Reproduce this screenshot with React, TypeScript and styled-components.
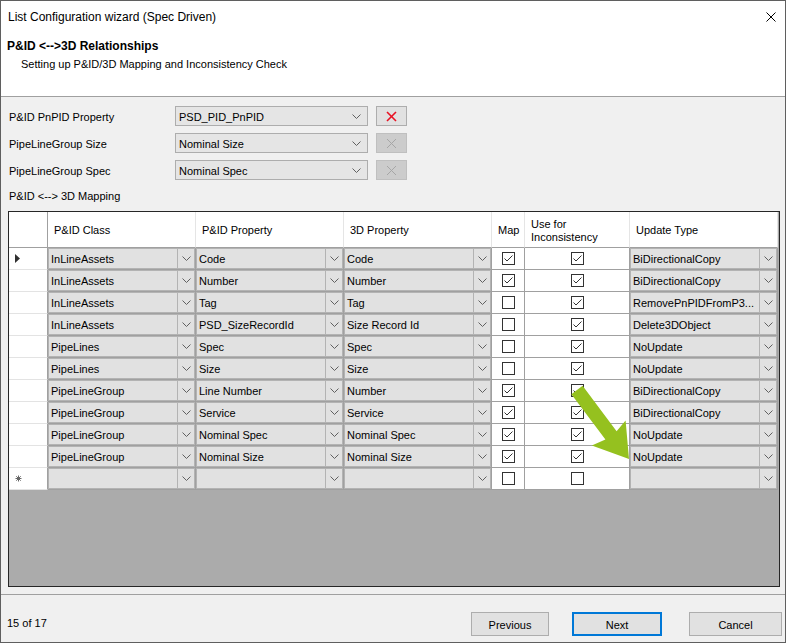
import React from "react";
import styled, { createGlobalStyle } from "styled-components";

const GlobalStyle = createGlobalStyle`
  html, body {
    margin: 0;
    padding: 0;
    background: #ffffff;
  }
  body {
    font-family: "Liberation Sans", Arial, sans-serif;
    font-size: 11px;
    color: #000;
  }
`;

type Row = {
  cls: string;
  prop: string;
  prop3d: string;
  map: boolean;
  use: boolean;
  update: string;
};

const rows: Row[] = [
  { cls: "InLineAssets", prop: "Code", prop3d: "Code", map: true, use: true, update: "BiDirectionalCopy" },
  { cls: "InLineAssets", prop: "Number", prop3d: "Number", map: true, use: true, update: "BiDirectionalCopy" },
  { cls: "InLineAssets", prop: "Tag", prop3d: "Tag", map: false, use: true, update: "RemovePnPIDFromP3..." },
  { cls: "InLineAssets", prop: "PSD_SizeRecordId", prop3d: "Size Record Id", map: false, use: true, update: "Delete3DObject" },
  { cls: "PipeLines", prop: "Spec", prop3d: "Spec", map: false, use: true, update: "NoUpdate" },
  { cls: "PipeLines", prop: "Size", prop3d: "Size", map: false, use: true, update: "NoUpdate" },
  { cls: "PipeLineGroup", prop: "Line Number", prop3d: "Number", map: true, use: true, update: "BiDirectionalCopy" },
  { cls: "PipeLineGroup", prop: "Service", prop3d: "Service", map: true, use: true, update: "BiDirectionalCopy" },
  { cls: "PipeLineGroup", prop: "Nominal Spec", prop3d: "Nominal Spec", map: true, use: true, update: "NoUpdate" },
  { cls: "PipeLineGroup", prop: "Nominal Size", prop3d: "Nominal Size", map: true, use: true, update: "NoUpdate" },
];

const props = [
  { label: "P&ID PnPID Property", value: "PSD_PID_PnPID", active: true },
  { label: "PipeLineGroup Size", value: "Nominal Size", active: false },
  { label: "PipeLineGroup Spec", value: "Nominal Spec", active: false },
];

function Chevron() {
  return (
    <svg width="9" height="5" viewBox="0 0 9 5">
      <polyline points="0.5,0.5 4.5,4.5 8.5,0.5" fill="none" stroke="#606060" strokeWidth="1" />
    </svg>
  );
}

function Check({ on }: { on: boolean }) {
  return (
    <CheckBox>
      {on && (
        <svg width="11" height="11" viewBox="0 0 11 11">
          <polyline points="1.5,5.5 4,8 9.5,2.5" fill="none" stroke="#333" strokeWidth="1" />
        </svg>
      )}
    </CheckBox>
  );
}

function GridCombo({ text }: { text: string }) {
  return (
    <ComboCell>
      <CellText>{text}</CellText>
      <CellArrow>
        <Chevron />
      </CellArrow>
    </ComboCell>
  );
}

export default function App() {
  return (
    <>
      <GlobalStyle />
      <Window>
        <TitleBar>
          <TitleText>List Configuration wizard (Spec Driven)</TitleText>
          <CloseIcon width="10" height="10" viewBox="0 0 10 10">
            <line x1="0.5" y1="0.5" x2="9.5" y2="9.5" stroke="#000" strokeWidth="1" />
            <line x1="9.5" y1="0.5" x2="0.5" y2="9.5" stroke="#000" strokeWidth="1" />
          </CloseIcon>
        </TitleBar>

        <Header>
          <HeaderTitle>P&amp;ID &lt;--&gt;3D Relationships</HeaderTitle>
          <HeaderSub>Setting up P&amp;ID/3D Mapping and Inconsistency Check</HeaderSub>
        </Header>

        <Body>
          {props.map((p) => (
            <PropRow key={p.label}>
              <PropLabel>{p.label}</PropLabel>
              <Combo>
                <span>{p.value}</span>
                <Chevron />
              </Combo>
              <ClearButton $active={p.active}>
                <svg width="11" height="11" viewBox="0 0 11 11">
                  <line x1="1" y1="1" x2="10" y2="10" stroke={p.active ? "#e81123" : "#a6a6a6"} strokeWidth={p.active ? 1.6 : 1} />
                  <line x1="10" y1="1" x2="1" y2="10" stroke={p.active ? "#e81123" : "#a6a6a6"} strokeWidth={p.active ? 1.6 : 1} />
                </svg>
              </ClearButton>
            </PropRow>
          ))}

          <SectionLabel>P&amp;ID &lt;--&gt; 3D Mapping</SectionLabel>

          <GridFrame>
            <Table>
              <CornerCell />
              <HeadCell>P&amp;ID Class</HeadCell>
              <HeadCell>P&amp;ID Property</HeadCell>
              <HeadCell>3D Property</HeadCell>
              <HeadCell>Map</HeadCell>
              <HeadCell>
                Use for
                <br />
                Inconsistency
              </HeadCell>
              <HeadCell>Update Type</HeadCell>

              {rows.map((r, i) => (
                <React.Fragment key={i}>
                  <RowHead>
                    {i === 0 && (
                      <svg width="5" height="9" viewBox="0 0 5 9">
                        <polygon points="0,0 5,4.5 0,9" fill="#303030" />
                      </svg>
                    )}
                  </RowHead>
                  <GridCombo text={r.cls} />
                  <GridCombo text={r.prop} />
                  <GridCombo text={r.prop3d} />
                  <CheckCell>
                    <Check on={r.map} />
                  </CheckCell>
                  <CheckCell>
                    <Check on={r.use} />
                  </CheckCell>
                  <GridCombo text={r.update} />
                </React.Fragment>
              ))}

              <RowHead>
                <svg width="7" height="7" viewBox="0 0 7 7">
                  <line x1="3.5" y1="0.5" x2="3.5" y2="6.5" stroke="#666" strokeWidth="1" />
                  <line x1="0.5" y1="3.5" x2="6.5" y2="3.5" stroke="#666" strokeWidth="1" />
                  <line x1="1.3" y1="1.3" x2="5.7" y2="5.7" stroke="#666" strokeWidth="1" />
                  <line x1="5.7" y1="1.3" x2="1.3" y2="5.7" stroke="#666" strokeWidth="1" />
                </svg>
              </RowHead>
              <GridCombo text="" />
              <GridCombo text="" />
              <GridCombo text="" />
              <CheckCell>
                <Check on={false} />
              </CheckCell>
              <CheckCell>
                <Check on={false} />
              </CheckCell>
              <GridCombo text="" />
            </Table>
          </GridFrame>
        </Body>

        <Footer>
          <PageInfo>15 of 17</PageInfo>
          <NavButton $w={78} $gap={0}>Previous</NavButton>
          <NavButton $w={90} $gap={23} $focused>
            Next
          </NavButton>
          <NavButton $w={93} $gap={27}>Cancel</NavButton>
        </Footer>

        <Arrow width="786" height="643" viewBox="0 0 786 643">
          <polygon
            points="571.4,394.2 582.6,385.8 616.6,431.2 625.6,420.4 629,459 591.8,445.4 605.4,439.6"
            fill="#95c11f"
          />
        </Arrow>
      </Window>
    </>
  );
}

const Window = styled.div`
  position: relative;
  width: 786px;
  height: 643px;
  box-sizing: border-box;
  border: 1px solid #5f5f5f;
  background: #f0f0f0;
  display: flex;
  flex-direction: column;
  overflow: hidden;
`;

const TitleBar = styled.div`
  height: 31px;
  background: #ffffff;
  display: flex;
  align-items: center;
  justify-content: space-between;
  padding-left: 7px;
`;

const TitleText = styled.span`
  font-size: 12px;
`;

const CloseIcon = styled.svg`
  margin-right: 9px;
`;

const Header = styled.div`
  height: 65px;
  background: #ffffff;
  border-bottom: 1px solid #a0a0a0;
  padding: 5px 0 0 6px;
  box-sizing: border-box;
  display: flex;
  flex-direction: column;
`;

const HeaderTitle = styled.div`
  font-weight: bold;
  font-size: 12px;
  line-height: 18px;
`;

const HeaderSub = styled.div`
  line-height: 18px;
  margin-left: 14px;
`;

const Body = styled.div`
  padding: 9px 0 0 7px;
  display: flex;
  flex-direction: column;
`;

const PropRow = styled.div`
  display: flex;
  align-items: center;
  height: 20px;
  margin-bottom: 7px;
`;

const PropLabel = styled.div`
  width: 167px;
  padding: 1px 0 0 1px;
  box-sizing: border-box;
`;

const Combo = styled.div`
  width: 193px;
  height: 20px;
  box-sizing: border-box;
  border: 1px solid #adadad;
  background: #e5e5e5;
  display: flex;
  align-items: center;
  justify-content: space-between;
  padding: 1px 6px 0 3px;
`;

const ClearButton = styled.div<{ $active: boolean }>`
  margin-left: 8px;
  width: 31px;
  height: 20px;
  box-sizing: border-box;
  border: 1px solid ${(p) => (p.$active ? "#adadad" : "#bfbfbf")};
  background: ${(p) => (p.$active ? "#e1e1e1" : "#cccccc")};
  display: flex;
  align-items: center;
  justify-content: center;
`;

const SectionLabel = styled.div`
  margin-top: 1px;
  padding-left: 1px;
  height: 16px;
  line-height: 16px;
  margin-bottom: 7px;
`;

const GridFrame = styled.div`
  width: 772px;
  height: 376px;
  box-sizing: border-box;
  border: 1px solid #262626;
  background: #ababab;
`;

const Table = styled.div`
  display: grid;
  grid-template-columns: 39px 148px 148px 148px 33px 105px 148px;
  grid-template-rows: 36px;
  grid-auto-rows: 22px;
`;

const CornerCell = styled.div`
  background: #ffffff;
  border-right: 1px solid #a0a0a0;
  border-bottom: 1px solid #a0a0a0;
`;

const HeadCell = styled.div`
  background: #ffffff;
  border-right: 1px solid #e5e5e5;
  border-bottom: 1px solid #a0a0a0;
  display: flex;
  align-items: center;
  padding: 2px 0 0 6px;
  line-height: 13px;
`;

const RowHead = styled.div`
  background: #ffffff;
  border-right: 1px solid #a0a0a0;
  border-bottom: 1px solid #e3e3e3;
  display: flex;
  align-items: center;
  padding-left: 6px;
`;

const ComboCell = styled.div`
  background: #e1e1e1;
  border-right: 1px solid #a0a0a0;
  border-bottom: 1px solid #a0a0a0;
  box-shadow: inset 0 0 0 1px #b3b3b3;
  display: flex;
  align-items: center;
  overflow: hidden;
`;

const CellText = styled.span`
  flex: 1;
  padding-left: 3px;
  white-space: nowrap;
  overflow: hidden;
`;

const CellArrow = styled.span`
  width: 16px;
  align-self: stretch;
  margin: 1px 1px 1px 0;
  border-left: 1px solid #b3b3b3;
  display: flex;
  align-items: center;
  justify-content: center;
`;

const CheckCell = styled.div`
  background: #ffffff;
  border-right: 1px solid #a0a0a0;
  border-bottom: 1px solid #a0a0a0;
  display: flex;
  align-items: center;
  justify-content: center;
`;

const CheckBox = styled.div`
  width: 13px;
  height: 13px;
  box-sizing: border-box;
  border: 1px solid #333333;
  background: #ffffff;
  display: flex;
  align-items: center;
  justify-content: center;
`;

const Footer = styled.div`
  margin-top: 7px;
  border-top: 1px solid #a0a0a0;
  flex: 1;
  display: flex;
  align-items: flex-start;
  padding: 17px 3px 0 6px;
`;

const PageInfo = styled.div`
  margin-right: auto;
  line-height: 22px;
`;

const NavButton = styled.div<{ $w: number; $gap: number; $focused?: boolean }>`
  width: ${(p) => p.$w}px;
  height: 24px;
  margin-left: ${(p) => p.$gap}px;
  box-sizing: border-box;
  border: ${(p) => (p.$focused ? "2px solid #0078d7" : "1px solid #adadad")};
  background: #e1e1e1;
  display: flex;
  align-items: center;
  justify-content: center;
  padding-top: 1px;
`;

const Arrow = styled.svg`
  position: absolute;
  left: -1px;
  top: -1px;
  pointer-events: none;
`;
